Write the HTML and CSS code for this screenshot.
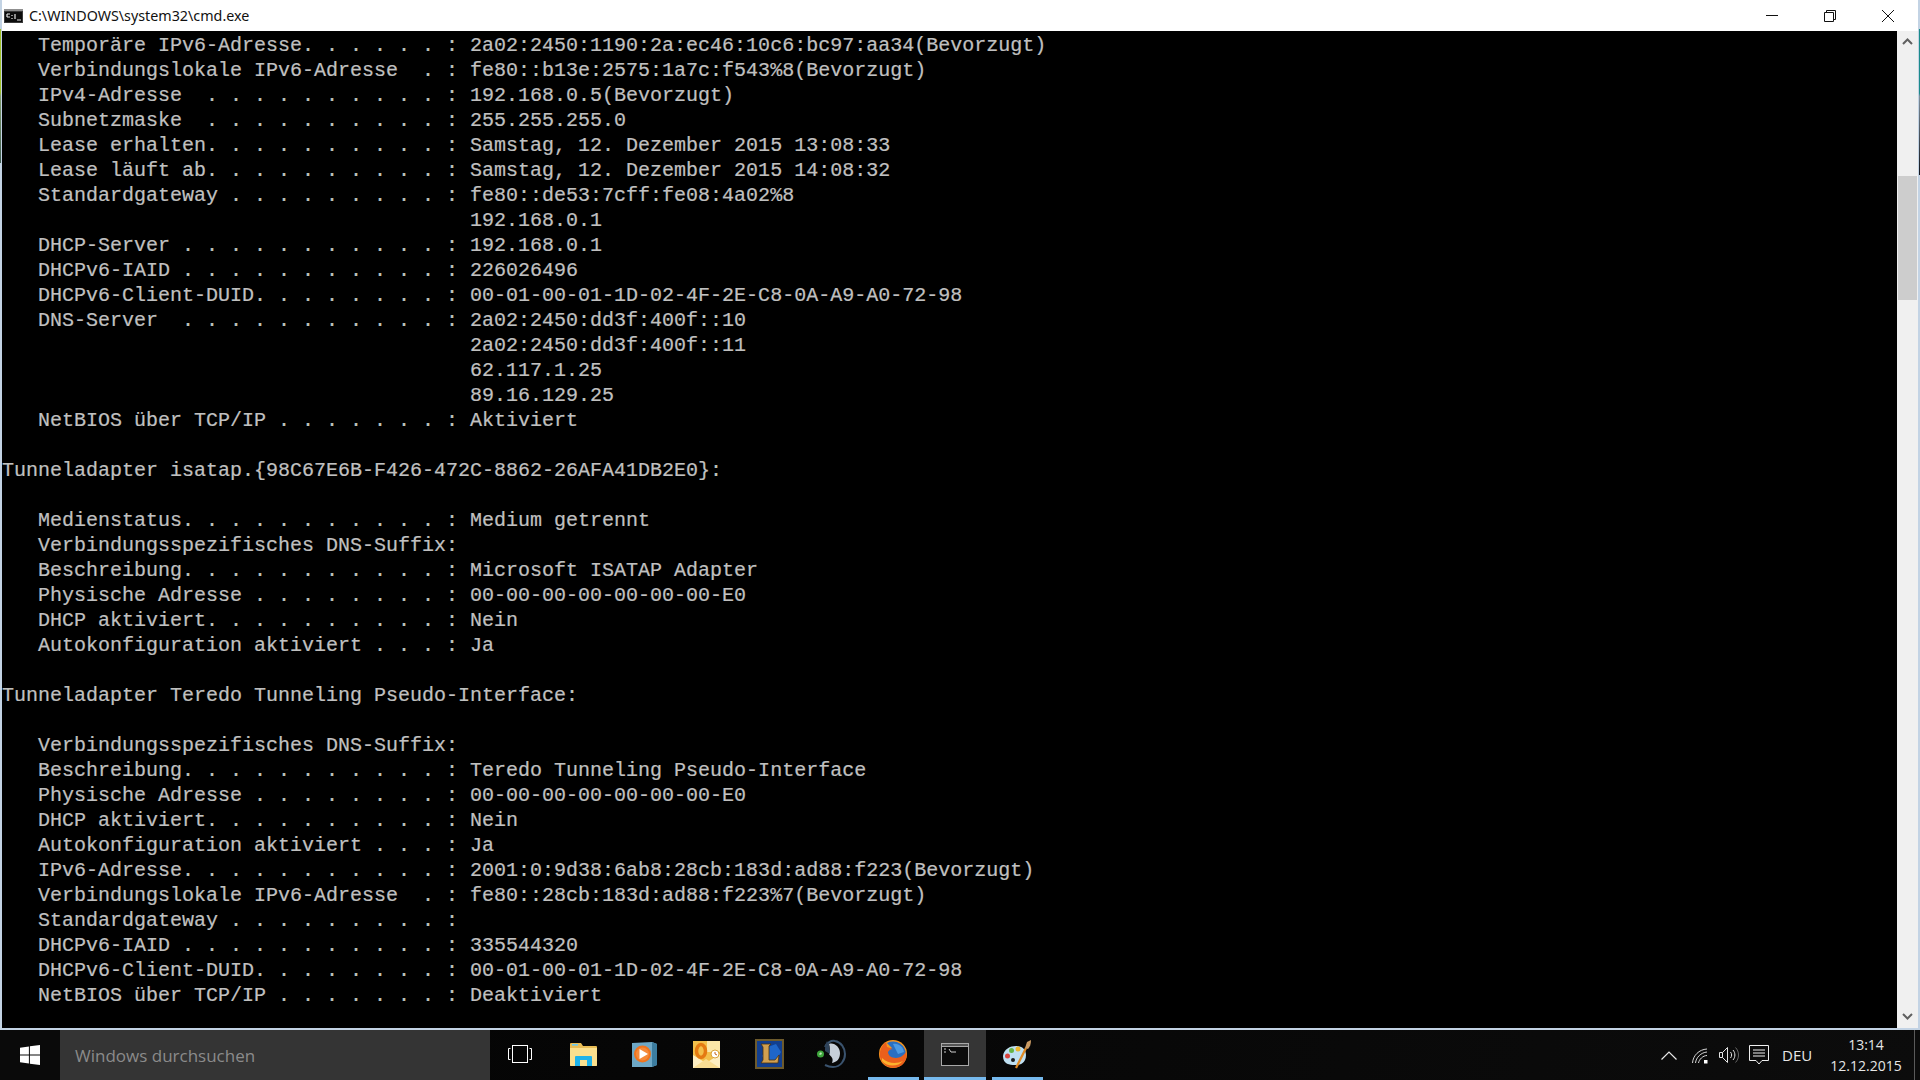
FILE: index.html
```html
<!DOCTYPE html>
<html lang="de">
<head>
<meta charset="utf-8">
<title>cmd.exe</title>
<link rel="stylesheet" href="styles.css">
</head>
<body>
<div class="edge-left"></div>
<div class="edge-right"></div>
<main class="window">
  <header class="titlebar">
    <svg class="app-icon" width="19" height="14" viewBox="0 0 19 14"><rect width="19" height="14" fill="#3a3a3a"/><rect x="1" y="3" width="17" height="10" fill="#0c0c0c"/><rect x="0" y="0" width="19" height="2" fill="#8f8f8f"/><path d="M3 5h3M3 8h3M3 5v3M8 6v1M8 9v1M11 5v5M13 11h4" stroke="#e6e6e6" stroke-width="1.200" fill="none"/></svg>
    <span class="title">C:\WINDOWS\system32\cmd.exe</span>
    <div class="winbtns">
      <button class="winbtn"><svg width="12" height="12" viewBox="0 0 12 12"><path d="M0 5.500h12" stroke="#111" fill="none"/></svg></button>
      <button class="winbtn"><svg width="12" height="12" viewBox="0 0 12 12"><path d="M.5 2.500h9v9h-9zM2.500 2.500v-2h9v9h-2" stroke="#111" fill="none"/></svg></button>
      <button class="winbtn"><svg width="12" height="12" viewBox="0 0 12 12"><path d="M0 0l12 12M12 0L0 12" stroke="#111" fill="none"/></svg></button>
    </div>
  </header>
  <div class="console">
<pre class="output">   Temporäre IPv6-Adresse. . . . . . : 2a02:2450:1190:2a:ec46:10c6:bc97:aa34(Bevorzugt)
   Verbindungslokale IPv6-Adresse  . : fe80::b13e:2575:1a7c:f543%8(Bevorzugt)
   IPv4-Adresse  . . . . . . . . . . : 192.168.0.5(Bevorzugt)
   Subnetzmaske  . . . . . . . . . . : 255.255.255.0
   Lease erhalten. . . . . . . . . . : Samstag, 12. Dezember 2015 13:08:33
   Lease läuft ab. . . . . . . . . . : Samstag, 12. Dezember 2015 14:08:32
   Standardgateway . . . . . . . . . : fe80::de53:7cff:fe08:4a02%8
                                       192.168.0.1
   DHCP-Server . . . . . . . . . . . : 192.168.0.1
   DHCPv6-IAID . . . . . . . . . . . : 226026496
   DHCPv6-Client-DUID. . . . . . . . : 00-01-00-01-1D-02-4F-2E-C8-0A-A9-A0-72-98
   DNS-Server  . . . . . . . . . . . : 2a02:2450:dd3f:400f::10
                                       2a02:2450:dd3f:400f::11
                                       62.117.1.25
                                       89.16.129.25
   NetBIOS über TCP/IP . . . . . . . : Aktiviert

Tunneladapter isatap.{98C67E6B-F426-472C-8862-26AFA41DB2E0}:

   Medienstatus. . . . . . . . . . . : Medium getrennt
   Verbindungsspezifisches DNS-Suffix:
   Beschreibung. . . . . . . . . . . : Microsoft ISATAP Adapter
   Physische Adresse . . . . . . . . : 00-00-00-00-00-00-00-E0
   DHCP aktiviert. . . . . . . . . . : Nein
   Autokonfiguration aktiviert . . . : Ja

Tunneladapter Teredo Tunneling Pseudo-Interface:

   Verbindungsspezifisches DNS-Suffix:
   Beschreibung. . . . . . . . . . . : Teredo Tunneling Pseudo-Interface
   Physische Adresse . . . . . . . . : 00-00-00-00-00-00-00-E0
   DHCP aktiviert. . . . . . . . . . : Nein
   Autokonfiguration aktiviert . . . : Ja
   IPv6-Adresse. . . . . . . . . . . : 2001:0:9d38:6ab8:28cb:183d:ad88:f223(Bevorzugt)
   Verbindungslokale IPv6-Adresse  . : fe80::28cb:183d:ad88:f223%7(Bevorzugt)
   Standardgateway . . . . . . . . . :
   DHCPv6-IAID . . . . . . . . . . . : 335544320
   DHCPv6-Client-DUID. . . . . . . . : 00-01-00-01-1D-02-4F-2E-C8-0A-A9-A0-72-98
   NetBIOS über TCP/IP . . . . . . . : Deaktiviert</pre>
    <aside class="scrollbar">
      <svg class="arrow" width="11" height="7" viewBox="0 0 11 7"><path d="M1 6l4.500-4.500L10 6" stroke="#606060" stroke-width="2" fill="none"/></svg>
      <div class="track"><div class="thumb"></div></div>
      <svg class="arrow" width="11" height="7" viewBox="0 0 11 7"><path d="M1 1l4.500 4.500L10 1" stroke="#606060" stroke-width="2" fill="none"/></svg>
    </aside>
  </div>
</main>
<footer class="taskbar">
  <div class="start">
    <svg width="20" height="20" viewBox="0 0 20 20"><path d="M0 2.800L8.900 1.500v8H0zM9.900 1.300L20 0v9.500H9.900zM0 10.500h8.900v8L0 17.200zM9.900 10.500H20V20L9.900 18.700z" fill="#fff"/></svg>
  </div>
  <div class="search">Windows durchsuchen</div>
  <div class="slot nudge"><svg width="24" height="18" viewBox="0 0 24 18"><rect x="4.500" y=".5" width="15" height="17" fill="none" stroke="#fff"/><path d="M2.500 3.500H.5v11h2M21.500 3.500h2v11h-2" fill="none" stroke="#fff"/></svg></div>
  <div class="slot"><svg width="27" height="23" viewBox="0 0 27 23"><path d="M0 1q0-1 1-1h10l2 3h13q1 0 1 1v18q0 1-1 1H1q-1 0-1-1z" fill="#e9bd55"/><rect x="2" y="1" width="6" height="1.600" fill="#6cc8ee"/><path d="M0 5h27v17q0 1-1 1H1q-1 0-1-1z" fill="#fbe08e"/><path d="M5 23v-9q0-1 1-1h15q1 0 1 1v9h-5v-6H10v6z" fill="#1fb3ea"/></svg></div>
  <div class="slot nudge"><svg width="25" height="25" viewBox="0 0 25 25"><path d="M0 1l20-1 5 2v21l-5 2H0z" fill="#6ea8c6"/><path d="M20 0l5 2v21l-5 2z" fill="#3c7da0"/><circle cx="10.500" cy="12" r="8.500" fill="#f0741e"/><circle cx="10.500" cy="12" r="6.500" fill="#f58a3a"/><path d="M7.500 7v10l8.500-5z" fill="#fff"/></svg></div>
  <div class="slot nudge"><svg width="27" height="27" viewBox="0 0 27 27"><rect width="27" height="27" fill="#f3c04b"/><rect x="14" y="0" width="13" height="11" fill="#fbe7a8"/><path d="M0 14l13 8 14-9v14H0z" fill="#fdeec2"/><path d="M0 27l13-9 14 9z" fill="#f8dc93"/><ellipse cx="8" cy="10" rx="4.500" ry="6.500" fill="none" stroke="#e47a12" stroke-width="3.500"/><circle cx="22" cy="13" r="4" fill="#fff" stroke="#d9a23a"/><path d="M22 11v2l2 1" stroke="#c4641a" fill="none"/></svg></div>
  <div class="slot"><svg width="29" height="30" viewBox="0 0 29 30"><rect width="29" height="30" fill="#6d5a2c"/><rect x="2" y="2" width="25" height="26" fill="#123f8f"/><path d="M7 17l6-9 8-3 5 8-5 9-8 2z" fill="#1f66c9"/><path d="M6 5h10l-2 2v14h6l4-5-1 8H6l2-3V8z" fill="#d1a050" stroke="#4d3210" stroke-width=".8"/></svg></div>
  <div class="slot"><svg width="30" height="30" viewBox="0 0 30 30"><path d="M9 8C11 4 15 1 19 2c6 1 10 7 10 13s-4 13-12 13c-3 0-6-1-8-2" fill="none" stroke="#3a536e" stroke-width="2"/><path d="M13 5c5-2 11 3 11 9s-3 9-8 10c2-5-1-6-3-9 1-3 1-7 0-10z" fill="#c7d0da"/><path d="M11 2c-2 3-2 7-2 10l5 3-1-10z" fill="#2e4259"/><circle cx="4.500" cy="15" r="3.500" fill="#3ea63c"/><path d="M3 15l2-2 1 2-2 1z" fill="#bfe8b8"/></svg></div>
  <div class="slot"><svg width="28" height="28" viewBox="0 0 28 28"><circle cx="14" cy="14" r="14" fill="#f6941e"/><path d="M8 3a13 13 0 0 1 19 12c-3 5-9 8-15 5-4-2-5-6-3-9 1-2 2-3 4-3-2-2-4-4-5-5z" fill="#2a6fc0"/><path d="M14 4c6-1 10 3 11 8l-6 2-3-6z" fill="#4c9ae2"/><path d="M1 12c1-5 3-8 6-10l1 5 6 2c-2 0-4 1-5 3 0 3 3 6 8 6 4 0 8-3 10-6 1 3 1 8-3 12-5 5-14 5-19 0-3-3-5-8-4-12z" fill="#ea5f1c"/><path d="M3 21c5 6 16 6 21 0-6 3-15 3-21-3z" fill="#fcb22d"/></svg></div>
  <div class="slot active"><svg width="28" height="23" viewBox="0 0 28 23"><rect width="28" height="23" fill="#a8a8a8"/><rect x="1" y="4" width="26" height="18" fill="#0b0b0b"/><rect x="1" y="1" width="26" height="2" fill="#555"/><path d="M3 6h2M3 9h2M8 6l2 3h5" stroke="#cfcfcf" fill="none"/></svg></div>
  <div class="slot"><svg width="30" height="30" viewBox="0 0 30 30"><path d="M1 17C2 10 8 7 14 7c7 0 10 4 10 9 0 8-6 10-9 10-4 0-14 1-14-9z" fill="#bfe0f2"/><circle cx="5.500" cy="17" r="2.500" fill="#d8433c"/><circle cx="9.500" cy="11.500" r="2.500" fill="#65b447"/><circle cx="16" cy="10" r="2.500" fill="#eeb52d"/><circle cx="11" cy="21" r="2" fill="#1b1b1b"/><path d="M14 29l10-20" stroke="#e08a24" stroke-width="2.200"/><path d="M23 9l2-6 4-2c0 4-1 7-3 9z" fill="#c99a63"/></svg></div>
  <div class="tray">
    <svg class="t-chev" width="16" height="9" viewBox="0 0 16 9"><path d="M.5 8.500L8 1l7.500 7.500" stroke="#e8e8e8" stroke-width="1.200" fill="none"/></svg>
    <svg class="t-wifi" width="16" height="16" viewBox="0 0 16 16"><path d="M.5 15C1 7.500 7 1.500 15 1M3.500 15C4 9.500 9 4.500 15 4M6.500 15C7 11.500 11 7.500 15 7.500" stroke="#d8d8d8" fill="none"/><rect x="12" y="12" width="3.500" height="3.500" fill="#fff"/></svg>
    <svg class="t-vol" width="20" height="18" viewBox="0 0 20 18"><path d="M.5 6.500h3l5-5v15l-5-5h-3zM3.500 6.500v5" fill="none" stroke="#e4e4e4"/><path d="M11.500 6c1.500 2 1.500 4 0 6M14 4c2.500 3 2.500 7 0 10" fill="none" stroke="#e4e4e4"/><path d="M16.500 1.500c4 4 4 11 0 15" fill="none" stroke="#666"/></svg>
    <svg class="t-msg" width="20" height="20" viewBox="0 0 20 20"><path d="M.5.500h19v15h-6.500l-3 3.500-3-3.500H.5z" fill="none" stroke="#efefef"/><path d="M4 5h12M4 8h12M4 11h12" stroke="#efefef"/></svg>
    <span class="lang">DEU</span>
    <div class="clock"><span>13:14</span><span>12.12.2015</span></div>
    <div class="showdesk"></div>
  </div>
</footer>
</body>
</html>
```
FILE: styles.css
```css
* { box-sizing: border-box; }
html, body { margin: 0; padding: 0; width: 1920px; height: 1080px; overflow: hidden; background: #050505; }
body { position: relative; display: flex; flex-direction: column; font-family: "Open Sans", "Noto Sans", sans-serif; }
.edge-left { position: absolute; left: 0; top: 29px; width: 1px; height: 134px; background: linear-gradient(#9fc027 0 47%, #7f9a6a 50%, #3e5a50 100%); z-index: 2; }
.edge-right { position: absolute; right: 0; top: 29px; width: 1px; height: 146px; background: linear-gradient(#1b8a8a 0 44%, #7f8f9c 46%, #10141c 100%); z-index: 2; }
.window { height: 1030px; display: flex; flex-direction: column; background: #fff; border: solid #c3d3e4; border-width: 0 2px 2px 2px; }
.titlebar { height: 31px; background: #fff; display: flex; align-items: center; padding-left: 2px; flex: none; }
.app-icon { margin-right: 6px; margin-top: 1px; }
.title { font-family: "Noto Sans", sans-serif; font-size: 14.3px; color: #111; white-space: nowrap; }
.winbtns { margin-left: auto; margin-right: 1px; display: flex; }
.winbtn { width: 58px; height: 30px; border: 0; background: transparent; padding: 0; display: flex; align-items: center; justify-content: center; }
.console { flex: 1; display: flex; min-height: 0; background: #000; }
.output { flex: 1; margin: 0; padding: 2px 0 0 0; font-family: "Liberation Mono", monospace; font-size: 20px; line-height: 25px; color: #c0c0c0; overflow: hidden; background: #000; font-weight: 400; -webkit-text-stroke: 0.2px #c0c0c0; }
.scrollbar { width: 21px; background: #f0f0f0; display: flex; flex-direction: column; align-items: center; padding: 7px 0 8px; }
.arrow { flex: none; }
.track { flex: 1; width: 100%; padding-top: 131px; }
.thumb { height: 124px; background: #cdcdcd; margin: 0 1px; }
.taskbar { height: 50px; flex: none; display: flex; align-items: stretch; background: linear-gradient(105deg, #0c0c0c, #050505 20%, #080808 60%, #0c0c0c); }
.start { width: 60px; display: flex; align-items: center; justify-content: center; background: #0a0a0a; }
.search { width: 430px; background: #343434; color: #8b8b8b; font-family: "Open Sans", sans-serif; font-size: 17px; display: flex; align-items: center; padding-left: 15px; }
.slot { width: 62px; display: flex; align-items: center; justify-content: center; position: relative; padding-bottom: 2px; }
.slot svg { display: block; }
.slot.nudge { padding-right: 2px; }
.slot:nth-child(9)::after, .slot:nth-child(10)::after, .slot:nth-child(11)::after { content: ""; position: absolute; left: 6px; right: 5px; bottom: 0; height: 3px; background: #76b9ed; }
.slot.active { background: #353535; }
.slot.active::after { left: 0 !important; right: 0 !important; }
.tray { margin-left: auto; display: flex; align-items: center; color: #e6e6e6; position: relative; }
.t-chev { margin-right: 15px; }
.t-wifi { margin-right: 11px; margin-top: 1px; }
.t-vol { margin-right: 10px; }
.t-msg { margin-right: 13px; }
.lang { font-size: 15px; width: 46px; font-family: "Open Sans", sans-serif; }
.clock { display: flex; flex-direction: column; align-items: center; width: 76px; font-size: 14px; line-height: 21px; margin-right: 10px; }
.showdesk { width: 1px; height: 50px; background: #5a5a5a; margin-right: 5px; }
```
